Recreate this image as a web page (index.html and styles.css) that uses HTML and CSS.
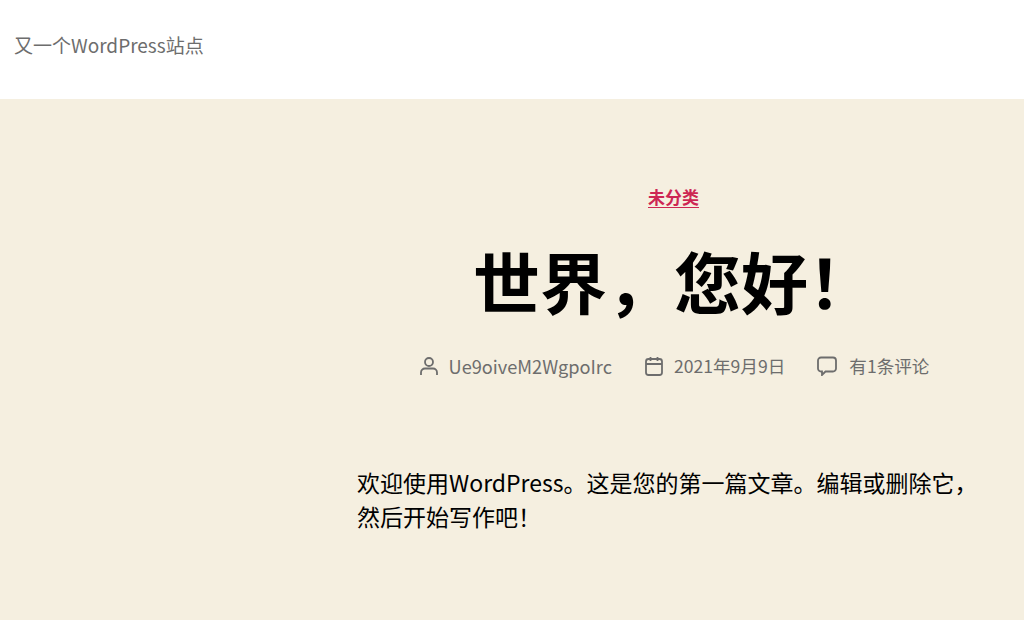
FILE: index.html
```html
<!DOCTYPE html>
<html lang="zh-CN">
<head>
<meta charset="utf-8">
<title>又一个WordPress站点</title>
<link rel="stylesheet" href="styles.css">
</head>
<body>
<header class="site-header"><a class="site-title" href="#">又一个WordPress站点</a></header>
<main class="hero">
  <div class="category"><a href="#">未分类</a></div>
  <h1 class="title">世界，您好！</h1>
  <ul class="meta">
    <li><svg class="ico" viewBox="0 0 20 20"><circle cx="10" cy="6" r="4" /><path d="M2 19v-2.5a4 4 0 0 1 4-4h8a4 4 0 0 1 4 4V19" /></svg><span class="author">Ue9oiveM2WgpoIrc</span></li>
    <li><svg class="ico" viewBox="0 0 20 20"><rect x="2" y="3" width="16" height="16" rx="2.5"/><path d="M2 8h16M6.500 1v4M13.500 1v4"/></svg><span>2021年9月9日</span></li>
    <li class="comments"><svg class="ico" viewBox="0 0 20 20"><path d="M4 1.500h12a3 3 0 0 1 3 3v8a3 3 0 0 1-3 3H8.500l-3.500 3.500V15.500H4a3 3 0 0 1-3-3v-8a3 3 0 0 1 3-3z"/></svg><span>有1条评论</span></li>
  </ul>
  <div class="content"><p>欢迎使用WordPress。这是您的第一篇文章。编辑或删除它，然后开始写作吧！</p></div>
</main>
</body>
</html>
```
FILE: styles.css
```css
* { box-sizing: border-box; }
html, body { margin: 0; padding: 0; }
body { background: #fff; color: #000; font-family: "Noto Sans CJK SC", "Noto Sans", sans-serif; height: 622px; overflow: hidden; }
a { color: inherit; text-decoration: none; }
.site-header { height: 99px; padding: 0 14px 10px; display: flex; align-items: center; }
.site-title { font-size: 19px; color: #6d6d6d; }
.hero { background: #f5efe0; height: 521px; padding-top: 86px; }
.category { padding-left: 323px; text-align: center; font-size: 17px; font-weight: 700; color: #cd2653; line-height: 24px; }
.category a { border-bottom: 1px solid #cd2653; display: inline-block; line-height: 20px; }
.title { margin: 29px 0 0; padding-left: 324px; text-align: center; font-size: 67px; font-weight: 700; line-height: 84px; }
.meta { list-style: none; margin: 32px 0 0; padding: 0 0 0 324px; display: flex; justify-content: center; gap: 32px; color: #6d6d6d; font-size: 17.6px; line-height: 24px; }
.meta li { display: flex; align-items: center; gap: 10px; }
.meta .author { font-size: 18.2px; }
.meta .comments { gap: 12px; }
.ico { width: 20px; height: 20px; fill: none; stroke: #6d6d6d; stroke-width: 1.8; }
.content { padding: 87px 40px 0 357px; font-size: 23px; line-height: 34px; }
.content p { margin: 0; }
```
